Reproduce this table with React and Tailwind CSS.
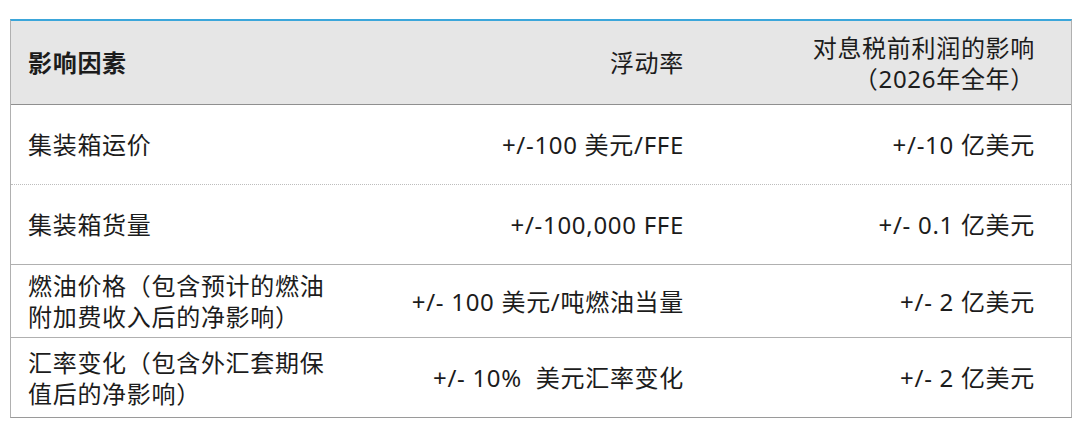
const rows = [
  { f: ["集装箱运价"], r: "+/-100 美元/FFE", e: "+/-10 亿美元", h: "h-[80px]", line: "border-b border-dotted border-[#bdbdbd]" },
  { f: ["集装箱货量"], r: "+/-100,000 FFE", e: "+/- 0.1 亿美元", h: "h-[80px]", line: "border-b border-[#b0b0b0]" },
  { f: ["燃油价格（包含预计的燃油", "附加费收入后的净影响）"], r: "+/- 100 美元/吨燃油当量", e: "+/- 2 亿美元", h: "h-[73px]", line: "border-b border-[#b0b0b0]" },
  { f: ["汇率变化（包含外汇套期保", "值后的净影响）"], r: "+/- 10%  美元汇率变化", e: "+/- 2 亿美元", h: "h-[79px]", line: "" },
];

export default function App() {
  return (
    <div className="w-[1080px] h-[424px] bg-white pt-[19px] pl-[10px] text-[#1c1c1c] tracking-[0.7px] font-['Noto_Sans','Noto_Sans_CJK_SC',sans-serif]">
      <div className="w-[1062px] border-t-2 border-t-[#3ba6da] border-x border-b border-x-[#b0b0b0] border-b-[#9a9a9a]">
        <div className="flex h-[84px] bg-[#e6e6e6] border-b border-[#8f8f8f] items-center text-[24px] leading-[31px]">
          <div className="w-[372px] pl-[17px] font-bold">影响因素</div>
          <div className="w-[301px] text-right">浮动率</div>
          <div className="w-[351px] text-right whitespace-pre">{"对息税前利润的影响\n（2026年全年）"}</div>
        </div>
        {rows.map((row, i) => (
          <div key={i} className={`flex items-center text-[24px] leading-[31px] ${row.h} ${row.line}`}>
            <div className="w-[372px] pl-[17px]">
              {row.f.map((t, j) => (
                <div key={j}>{t}</div>
              ))}
            </div>
            <div className="w-[301px] text-right whitespace-pre">{row.r}</div>
            <div className="w-[351px] text-right">{row.e}</div>
          </div>
        ))}
      </div>
    </div>
  );
}
